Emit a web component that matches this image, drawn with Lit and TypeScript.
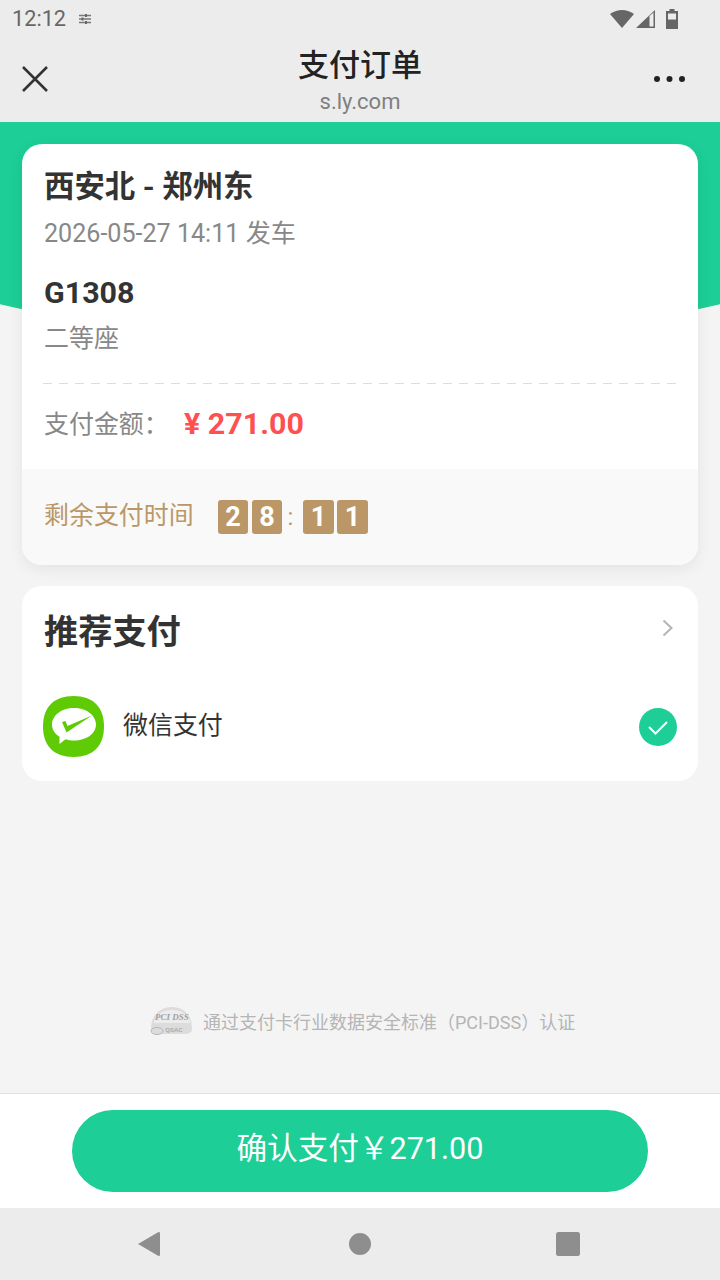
import { LitElement, html, css, svg } from 'lit';
import { customElement } from 'lit/decorators.js';

@customElement('app-root')
export class AppRoot extends LitElement {
  static styles = css`
    :host {
      display: block;
      width: 720px;
      height: 1280px;
      font-family: Roboto, "Noto Sans CJK SC", sans-serif;
      color: #333;
    }
    .page {
      width: 720px;
      height: 1280px;
      display: flex;
      flex-direction: column;
      background: #f4f4f4;
      overflow: hidden;
    }
    .status {
      height: 38px;
      flex: none;
      box-sizing: border-box;
      background: #ececec;
      display: flex;
      align-items: center;
      padding: 0 42px 0 12px;
      color: #666;
      font-size: 21.7px;
    }
    .status .time { margin: -2px 13px 0 0; }
    .status .right { margin-left: auto; display: flex; align-items: center; gap: 10px; }
    .header {
      height: 84px;
      flex: none;
      background: #ececec;
      display: flex;
      align-items: center;
      justify-content: space-between;
      padding: 0 34px 0 21px;
      position: relative;
    }
    .header .close { margin-top: -2px; }
    .header .dots { margin-top: -2px; }
    .title {
      position: absolute;
      left: 0;
      right: 0;
      top: 6px;
      text-align: center;
      line-height: 44px;
      font-size: 31px;
      font-weight: 500;
      color: #222;
    }
    .domain {
      position: absolute;
      left: 0;
      right: 0;
      top: 50px;
      text-align: center;
      line-height: 28px;
      font-size: 22px;
      color: #808080;
    }
    .main {
      flex: 1;
      position: relative;
      padding: 22px 22px 0;
      display: flex;
      flex-direction: column;
      gap: 21px;
      min-height: 0;
      overflow: hidden;
    }
    .hero {
      position: absolute;
      left: -1215px;
      top: -2926px;
      width: 3150px;
      height: 3150px;
      border-radius: 50%;
      background: #1dce96;
    }
    .card {
      position: relative;
      background: #fff;
      border-radius: 20px;
      overflow: hidden;
    }
    .order { box-shadow: 0 4px 16px rgba(0, 0, 0, 0.07); }
    .info { padding: 21px 21px 0 22px; height: 325px; box-sizing: border-box; }
    .route { font-size: 30.4px; line-height: 44px; font-weight: 700; color: #333; }
    .depart { font-size: 25.1px; line-height: 36px; color: #888; margin-top: 7px; }
    .train { font-size: 30.4px; line-height: 40px; font-weight: 700; color: #333; margin-top: 21px; }
    .seat { font-size: 24.96px; line-height: 36px; color: #888; margin-top: 8px; }
    .line {
      height: 1px;
      margin: 26px 0 0 -1px;
      background: repeating-linear-gradient(90deg, #ddd 0 9px, transparent 9px 16px);
    }
    .amount { display: flex; align-items: center; margin-top: 21px; height: 40px; }
    .amount .label { font-size: 24.96px; line-height: 40px; color: #888; width: 140px; }
    .amount .value { font-size: 30.4px; line-height: 40px; font-weight: 700; color: #ff5050; margin-top: -2px; }
    .timer {
      height: 96px;
      background: #f9f9f9;
      display: flex;
      align-items: center;
      padding-left: 22px;
      color: #bb9767;
      font-size: 24.96px;
    }
    .timer .label { width: 174px; margin-top: -8px; }
    .digit {
      width: 30px;
      height: 34px;
      margin-right: 4px;
      border-radius: 3px;
      background: #bb9767;
      color: #fff;
      font-size: 27px;
      font-weight: 700;
      display: flex;
      align-items: center;
      justify-content: center;
    }
    .digit.wide { width: 31px; margin-right: 3px; }
    .colon { width: 17px; margin-left: -4px; margin-right: 4px; text-align: center; font-size: 24px; }
    .pay { height: 195px; padding: 0 21px 0 22px; }
    .pay-head {
      height: 94px;
      display: flex;
      align-items: center;
      justify-content: space-between;
    }
    .pay-head .name { font-size: 34.2px; line-height: 44px; font-weight: 700; color: #333; margin-top: -2px; }
    .pay-head .more { margin: -10px 3px 0 0; }
    .pay-row { display: flex; align-items: center; margin-top: 16px; }
    .pay-row .wx { margin-left: -1px; }
    .pay-row .label { font-size: 24.96px; margin-left: 19px; margin-top: -8px; color: #333; }
    .pay-row .check { margin-left: auto; }
    svg { display: block; }
    .cert {
      position: absolute;
      left: 149px;
      top: 884px;
      display: flex;
      align-items: center;
      gap: 9px;
      color: #b5b5b5;
      font-size: 18px;
    }
    .cert span { margin-top: -1px; }
    .bar {
      height: 115px;
      flex: none;
      box-sizing: border-box;
      background: #fff;
      border-top: 1px solid #e2e2e2;
      padding-top: 16px;
      display: flex;
      justify-content: center;
    }
    .btn {
      width: 576px;
      height: 82px;
      box-sizing: border-box;
      padding-bottom: 10px;
      border-radius: 41px;
      background: #1dce96;
      color: #fff;
      font-size: 30.6px;
      display: flex;
      align-items: center;
      justify-content: center;
    }
    .nav {
      height: 72px;
      flex: none;
      background: #ececec;
      display: flex;
      align-items: center;
      justify-content: space-between;
      padding: 0 140px 0 137px;
    }
    .nav .home { margin-left: 2px; }
  `;

  private statusIcons() {
    return html`
      <svg width="24" height="20" viewBox="0 0 24 20"><path d="M0 5 Q12 -3 24 5 L12 19 Z" fill="#666"/></svg>
      <svg width="20" height="20" viewBox="0 0 20 20" style="margin-left:-8px"><path d="M0 19 L19 1 V19 Z" fill="#666"/><path d="M13.500 7 L17.500 3.500 V17.500 H13.500 Z" fill="#ececec"/></svg>
      <svg width="12" height="20" viewBox="0 0 12 20"><path d="M3.500 0 H8.500 V2 H12 V20 H0 V2 H3.500 Z" fill="#666"/><rect x="2" y="4.500" width="8" height="6" fill="#ececec"/></svg>
    `;
  }

  private wechatIcon() {
    return svg`<svg class="wx" width="61" height="61" viewBox="0 0 61 61">
      <path d="M30.500 0 C50 0 61 11 61 30.500 C61 50 50 61 30.500 61 C11 61 0 50 0 30.500 C0 11 11 0 30.500 0 Z" fill="#5ecb05"/>
      <path d="M31 12 C43.500 12 53 19.500 53 28.500 C53 37.500 43.500 44.500 31 44.500 C28 44.500 25 44 22.500 43.200 L16.500 48 L16.500 40.800 C11.500 37.500 9 33.500 9 28.500 C9 19.500 18.500 12 31 12 Z" fill="#fff"/>
      <path d="M19 26 L22.500 25 L24.500 30 L49 19.500 L23.500 36.500 Z" fill="#5ecb05"/>
    </svg>`;
  }

  private pciBadge() {
    return svg`<svg width="45" height="30" viewBox="0 0 45 30">
      <path d="M2 23 C2 8 12 1 23 1 C34 1 43 8 43 23 Q43 28 36 28 H8 Q2 28 2 23 Z" fill="#dcdcdc"/>
      <path d="M5 15 C8 7 15 4 23 4 C31 4 38 7 41 15 V17 H5 Z" fill="#ececec"/>
      <text x="23" y="14" text-anchor="middle" font-size="9" font-style="italic" font-weight="700" font-family="Liberation Serif, serif" fill="#a0a0a0">PCI DSS</text>
      <text x="25" y="26" text-anchor="middle" font-size="6" font-weight="700" font-family="Liberation Sans, sans-serif" fill="#ababab">QSAC</text>
      <ellipse cx="8" cy="25" rx="6" ry="3.500" fill="none" stroke="#b5b5b5"/>
    </svg>`;
  }

  render() {
    return html`
      <div class="page">
        <div class="status">
          <span class="time">12:12</span>
          <svg width="12" height="12" viewBox="0 0 12 12"><path d="M0 2.500 H12 M0 6 H12 M0 9.500 H12" stroke="#777" stroke-width="1.400"/><path d="M7 1 V4 M3.500 4.500 V7.500 M7 8 V11" stroke="#666" stroke-width="2"/></svg>
          <div class="right">${this.statusIcons()}</div>
        </div>
        <div class="header">
          <div class="title">支付订单</div>
          <div class="domain">s.ly.com</div>
          <svg class="close" width="28" height="28" viewBox="0 0 28 28"><path d="M2 2 L26 26 M26 2 L2 26" stroke="#333" stroke-width="2.600" fill="none"/></svg>
          <svg class="dots" width="32" height="8" viewBox="0 0 32 8"><circle cx="3" cy="4" r="3" fill="#222"/><circle cx="15.500" cy="4" r="3" fill="#222"/><circle cx="28" cy="4" r="3" fill="#222"/></svg>
        </div>
        <div class="main">
          <div class="hero"></div>
          <div class="card order">
            <div class="info">
              <div class="route">西安北 - 郑州东</div>
              <div class="depart">2026-05-27 14:11 发车</div>
              <div class="train">G1308</div>
              <div class="seat">二等座</div>
              <div class="line"></div>
              <div class="amount"><span class="label">支付金额：</span><span class="value">¥ 271.00</span></div>
            </div>
            <div class="timer">
              <span class="label">剩余支付时间</span>
              <span class="digit">2</span><span class="digit">8</span>
              <span class="colon">:</span>
              <span class="digit wide">1</span><span class="digit wide">1</span>
            </div>
          </div>
          <div class="card pay">
            <div class="pay-head">
              <span class="name">推荐支付</span>
              <svg class="more" width="12" height="18" viewBox="0 0 12 18"><path d="M1.500 1.500 L9.500 9 L1.500 16.500" stroke="#b5b5b5" stroke-width="2" fill="none"/></svg>
            </div>
            <div class="pay-row">
              ${this.wechatIcon()}
              <span class="label">微信支付</span>
              <svg class="check" width="38" height="38" viewBox="0 0 38 38"><circle cx="19" cy="19" r="19" fill="#1dce96"/><path d="M10 19 L16.500 25.500 L28 14" stroke="#fff" stroke-width="2" fill="none"/></svg>
            </div>
          </div>
          <div class="cert">${this.pciBadge()}<span>通过支付卡行业数据安全标准（PCI-DSS）认证</span></div>
        </div>
        <div class="bar"><div class="btn">确认支付￥271.00</div></div>
        <div class="nav">
          <svg width="24" height="26" viewBox="0 0 24 26"><path d="M21.500 1 Q23 0.500 23 2.500 V23.500 Q23 25.500 21.500 25 L1 13 Z" fill="#8e8e8e"/></svg>
          <svg class="home" width="22" height="22" viewBox="0 0 22 22"><circle cx="11" cy="11" r="11" fill="#8e8e8e"/></svg>
          <svg width="24" height="24" viewBox="0 0 24 24"><rect width="24" height="24" rx="2.500" fill="#8e8e8e"/></svg>
        </div>
      </div>
    `;
  }
}
